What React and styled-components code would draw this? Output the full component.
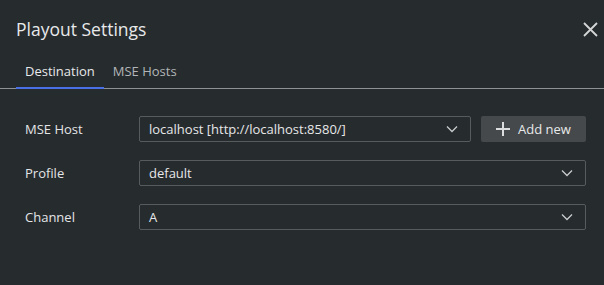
import React from "react";
import styled, { createGlobalStyle } from "styled-components";

const GlobalStyle = createGlobalStyle`
  html, body {
    margin: 0;
    padding: 0;
    background: #262b2e;
  }
  body {
    font-family: "Open Sans", "Noto Sans", sans-serif;
    color: #e4e5e6;
  }
`;

const Dialog = styled.div`
  width: 604px;
  height: 285px;
  background: #262b2e;
  overflow: hidden;
`;

const Header = styled.div`
  display: flex;
  align-items: center;
  justify-content: space-between;
  padding: 16px 6px 0 16px;
  height: 26px;
`;

const Title = styled.h2`
  margin: 0;
  font-size: 17.5px;
  font-weight: 400;
  color: #e8e9ea;
  line-height: 26px;
`;

const CloseButton = styled.button`
  width: 15px;
  height: 15px;
  padding: 0;
  border: none;
  background: none;
  display: flex;
  align-items: center;
  justify-content: center;
  cursor: pointer;
`;

const TabBar = styled.div`
  display: flex;
  margin-top: 16px;
  padding-left: 16px;
  border-bottom: 1px solid #8f9294;
`;

const Tab = styled.div`
  padding: 0 9px;
  height: 31px;
  line-height: 26px;
  font-size: 13px;
  color: ${(p) => (p.active ? "#e8e9ea" : "#b3b6b8")};
  border-bottom: 2px solid ${(p) => (p.active ? "#4b6fe4" : "transparent")};
  margin-bottom: -1px;
  box-sizing: border-box;
  cursor: pointer;
`;

const Form = styled.div`
  display: flex;
  flex-direction: column;
  gap: 18px;
  padding: 27px 18px 0 25px;
`;

const Row = styled.div`
  display: flex;
  align-items: center;
  gap: 10px;
`;

const Label = styled.div`
  width: 114px;
  margin-right: -10px;
  font-size: 13px;
  color: #e4e5e6;
`;

const Select = styled.div`
  flex: 1;
  height: 26px;
  box-sizing: border-box;
  border: 1px solid #575b5e;
  border-radius: 2px;
  display: flex;
  align-items: center;
  justify-content: space-between;
  padding: 0 12px 0 9px;
  font-size: 13px;
  color: #e6e7e8;
`;

const AddButton = styled.button`
  width: 105px;
  height: 26px;
  border: none;
  border-radius: 2px;
  background: #45494c;
  color: #e8e9ea;
  font-family: inherit;
  font-size: 13px;
  display: flex;
  align-items: center;
  justify-content: center;
  gap: 8px;
  padding: 0;
  cursor: pointer;
`;

const Chevron = () => (
  <svg width="12" height="8" viewBox="0 0 12 8" fill="none">
    <path d="M1 1.5 L6 6.5 L11 1.5" stroke="#c9cbcc" strokeWidth="1.3" />
  </svg>
);

const Plus = () => (
  <svg width="14" height="14" viewBox="0 0 14 14">
    <path d="M7 0 V14 M0 7 H14" stroke="#dcdddf" strokeWidth="2" />
  </svg>
);

const Cross = () => (
  <svg width="15" height="15" viewBox="0 0 15 15">
    <path d="M1 1 L14 14 M14 1 L1 14" stroke="#d4d5d6" strokeWidth="1.8" />
  </svg>
);

function App() {
  return (
    <Dialog>
      <GlobalStyle />
      <Header>
        <Title>Playout Settings</Title>
        <CloseButton>
          <Cross />
        </CloseButton>
      </Header>
      <TabBar>
        <Tab active>Destination</Tab>
        <Tab>MSE Hosts</Tab>
      </TabBar>
      <Form>
        <Row>
          <Label>MSE Host</Label>
          <Select>
            localhost [http://localhost:8580/]
            <Chevron />
          </Select>
          <AddButton>
            <Plus />
            Add new
          </AddButton>
        </Row>
        <Row>
          <Label>Profile</Label>
          <Select>
            default
            <Chevron />
          </Select>
        </Row>
        <Row>
          <Label>Channel</Label>
          <Select>
            A
            <Chevron />
          </Select>
        </Row>
      </Form>
    </Dialog>
  );
}

export default App;
